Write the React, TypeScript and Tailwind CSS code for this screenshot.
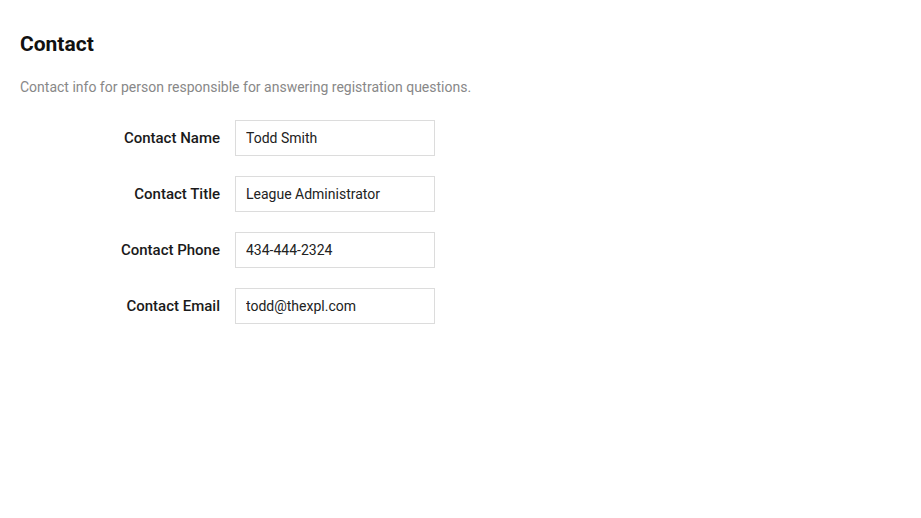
const fields = [
  { label: "Contact Name", value: "Todd Smith" },
  { label: "Contact Title", value: "League Administrator" },
  { label: "Contact Phone", value: "434-444-2324" },
  { label: "Contact Email", value: "todd@thexpl.com" },
];

export default function App() {
  return (
    <div className="min-h-screen bg-white pl-5 pt-[30px] font-['Roboto',sans-serif]">
      <h1 className="text-[21px] leading-7 font-bold text-[#111]">Contact</h1>
      <p className="mt-[19px] text-sm leading-5 text-[#888]">
        Contact info for person responsible for answering registration questions.
      </p>
      <div className="mt-[23px] flex flex-col gap-5">
        {fields.map((f) => (
          <div key={f.label} className="flex items-center">
            <label className="w-[200px] text-right text-[15px] font-medium text-[#1a1a1a]">
              {f.label}
            </label>
            <input
              readOnly
              value={f.value}
              className="ml-[15px] h-9 w-[200px] border border-[#dcdcdc] px-[10px] text-sm text-[#222] outline-none"
            />
          </div>
        ))}
      </div>
    </div>
  );
}
